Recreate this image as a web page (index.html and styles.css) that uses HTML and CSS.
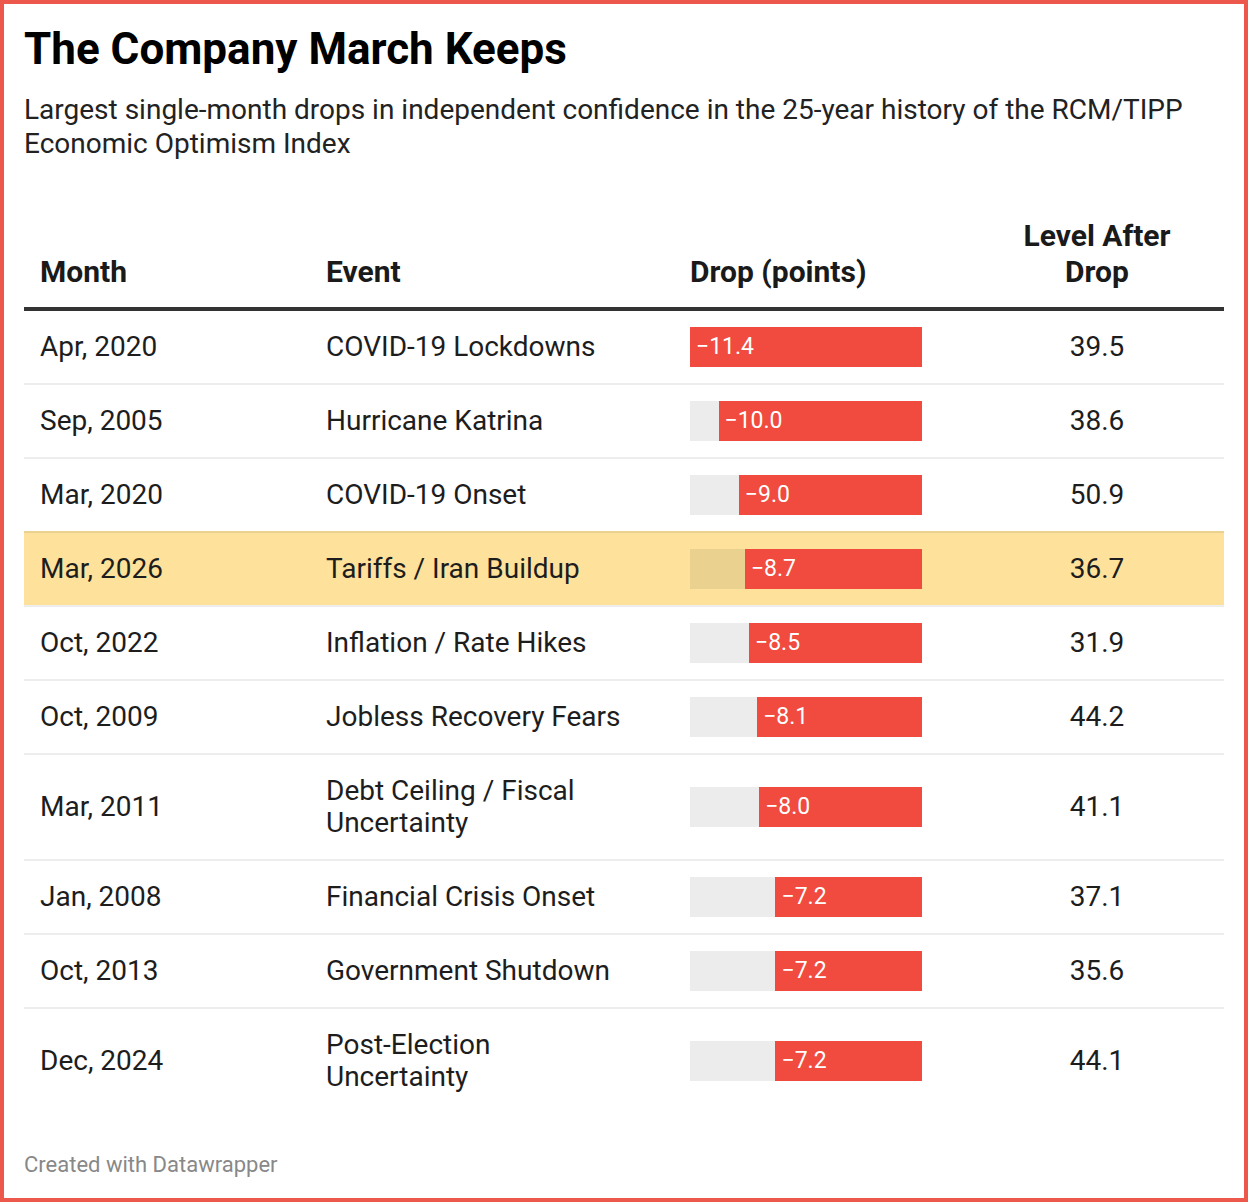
FILE: index.html
```html
<!DOCTYPE html>
<html lang="en">
<head>
<meta charset="utf-8">
<title>The Company March Keeps</title>
<link rel="stylesheet" href="styles.css">
</head>
<body>
<div class="frame">
  <h1 class="title">The Company March Keeps</h1>
  <p class="subtitle">Largest single-month drops in independent confidence in the 25-year history of the RCM/TIPP Economic Optimism Index</p>

  <div class="table">
    <div class="row head">
      <div class="cell">Month</div>
      <div class="cell event">Event</div>
      <div class="cell">Drop (points)</div>
      <div class="cell level">Level After<br>Drop</div>
    </div>

    <div class="row">
      <div class="cell">Apr, 2020</div>
      <div class="cell event">COVID-19 Lockdowns</div>
      <div class="cell drop"><div class="bar"><div class="fill" style="width:100%">−11.4</div></div></div>
      <div class="cell level">39.5</div>
    </div>
    <div class="row">
      <div class="cell">Sep, 2005</div>
      <div class="cell event">Hurricane Katrina</div>
      <div class="cell drop"><div class="bar"><div class="fill" style="width:87.72%">−10.0</div></div></div>
      <div class="cell level">38.6</div>
    </div>
    <div class="row">
      <div class="cell">Mar, 2020</div>
      <div class="cell event">COVID-19 Onset</div>
      <div class="cell drop"><div class="bar"><div class="fill" style="width:78.95%">−9.0</div></div></div>
      <div class="cell level">50.9</div>
    </div>
    <div class="row highlight">
      <div class="cell">Mar, 2026</div>
      <div class="cell event">Tariffs / Iran Buildup</div>
      <div class="cell drop"><div class="bar"><div class="fill" style="width:76.32%">−8.7</div></div></div>
      <div class="cell level">36.7</div>
    </div>
    <div class="row">
      <div class="cell">Oct, 2022</div>
      <div class="cell event">Inflation / Rate Hikes</div>
      <div class="cell drop"><div class="bar"><div class="fill" style="width:74.56%">−8.5</div></div></div>
      <div class="cell level">31.9</div>
    </div>
    <div class="row">
      <div class="cell">Oct, 2009</div>
      <div class="cell event">Jobless Recovery Fears</div>
      <div class="cell drop"><div class="bar"><div class="fill" style="width:71.05%">−8.1</div></div></div>
      <div class="cell level">44.2</div>
    </div>
    <div class="row">
      <div class="cell">Mar, 2011</div>
      <div class="cell event">Debt Ceiling / Fiscal Uncertainty</div>
      <div class="cell drop"><div class="bar"><div class="fill" style="width:70.18%">−8.0</div></div></div>
      <div class="cell level">41.1</div>
    </div>
    <div class="row">
      <div class="cell">Jan, 2008</div>
      <div class="cell event">Financial Crisis Onset</div>
      <div class="cell drop"><div class="bar"><div class="fill" style="width:63.16%">−7.2</div></div></div>
      <div class="cell level">37.1</div>
    </div>
    <div class="row">
      <div class="cell">Oct, 2013</div>
      <div class="cell event">Government Shutdown</div>
      <div class="cell drop"><div class="bar"><div class="fill" style="width:63.16%">−7.2</div></div></div>
      <div class="cell level">35.6</div>
    </div>
    <div class="row">
      <div class="cell">Dec, 2024</div>
      <div class="cell event">Post-Election Uncertainty</div>
      <div class="cell drop"><div class="bar"><div class="fill" style="width:63.16%">−7.2</div></div></div>
      <div class="cell level">44.1</div>
    </div>
  </div>

  <p class="footer">Created with Datawrapper</p>
</div>
</body>
</html>
```

FILE: styles.css
```css
* {
  box-sizing: border-box;
}

html, body {
  margin: 0;
  padding: 0;
  background: #ffffff;
}

body {
  font-family: Roboto, "Liberation Sans", Arial, sans-serif;
  color: #1d1d1d;
}

.frame {
  width: 1248px;
  height: 1202px;
  border: 4px solid #ec584c;
  padding: 19px 20px 0 20px;
}

.title {
  margin: 0;
  font-size: 44px;
  line-height: 53px;
  font-weight: 700;
  color: #000000;
}

.subtitle {
  margin: 17px 0 0 0;
  font-size: 28px;
  line-height: 34px;
  font-weight: 400;
  color: #222222;
}

.table {
  margin-top: 41px;
  width: 1200px;
}

.row {
  display: grid;
  grid-template-columns: 286px 364px 296px 254px;
  align-items: center;
  border-top: 2px solid rgba(0, 0, 0, 0.07);
  font-size: 28px;
  line-height: 32px;
}

.row.head {
  align-items: end;
  border-top: none;
  border-bottom: 4px solid #333333;
  font-size: 30px;
  font-weight: 700;
  line-height: 36px;
  color: #1a1a1a;
}

.row.head + .row {
  border-top: none;
}

.row.highlight {
  background: #fee29b;
}

.cell {
  padding: 20px 16px;
}

.row.head .cell {
  padding: 16px 16px 17px 16px;
}

.cell.event {
  padding-right: 46px;
}

.cell.drop {
  padding: 16px 16px;
}

.cell.level {
  text-align: center;
}

.bar {
  width: 232px;
  height: 40px;
  background: rgba(0, 0, 0, 0.075);
  display: flex;
  justify-content: flex-end;
}

.fill {
  height: 40px;
  background: #f04b3e;
  color: #ffffff;
  font-size: 23px;
  line-height: 40px;
  padding-left: 6px;
  white-space: nowrap;
}

.footer {
  margin: 39px 0 0 0;
  font-size: 22px;
  line-height: 26px;
  color: #888888;
}
```
